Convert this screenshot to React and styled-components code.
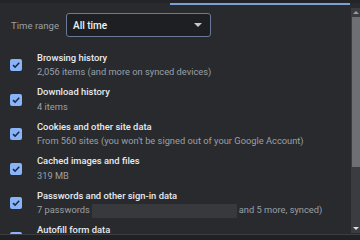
import React from 'react';
import styled, { createGlobalStyle } from 'styled-components';

const GlobalStyle = createGlobalStyle`
  html, body {
    margin: 0;
    padding: 0;
    background: #292a2d;
  }
  body {
    font-family: Roboto, "Liberation Sans", sans-serif;
  }
`;

const items = [
  { title: 'Browsing history', sub: '2,056 items (and more on synced devices)' },
  { title: 'Download history', sub: '4 items' },
  { title: 'Cookies and other site data', sub: "From 560 sites (you won't be signed out of your Google Account)" },
  { title: 'Cached images and files', sub: '319 MB' },
  { title: 'Passwords and other sign-in data', sub: '7 passwords', hidden: true, tail: 'and 5 more, synced)' },
  { title: 'Autofill form data', sub: '' },
];

function App() {
  return (
    <>
      <GlobalStyle />
      <Page>
        <TopStrip />
        <TabLine />
        <Middle>
          <Content>
            <TimeRow>
              <Label>Time range</Label>
              <Select>
                <span>All time</span>
                <Caret />
              </Select>
            </TimeRow>
            <List>
              {items.map((it) => (
                <Item key={it.title}>
                  <Check>
                    <svg width="12" height="12" viewBox="0 0 12 12">
                      <path d="M3 6.2 L5.1 8.2 L9.2 3.8" fill="none" stroke="#1d2a44" strokeWidth="1.6" />
                    </svg>
                  </Check>
                  <Text>
                    <Title>{it.title}</Title>
                    <Sub>
                      {it.sub}
                      {it.hidden && <Redacted />}
                      {it.tail}
                    </Sub>
                  </Text>
                </Item>
              ))}
            </List>
          </Content>
          <Scrollbar>
            <Arrow />
            <Thumb />
            <Arrow $down />
          </Scrollbar>
        </Middle>
        <Footer />
      </Page>
    </>
  );
}

const Page = styled.div`
  width: 360px;
  height: 240px;
  overflow: hidden;
  display: flex;
  flex-direction: column;
  background: #292a2d;
`;

const TopStrip = styled.div`
  height: 3px;
  background: #232427;
`;

const TabLine = styled.div`
  height: 2px;
  margin-left: 170px;
  width: 180px;
  background: #7d9fd6;
`;

const Middle = styled.div`
  flex: 1;
  display: flex;
  min-height: 0;
  overflow: hidden;
`;

const Content = styled.div`
  flex: 1;
  padding: 8px 0 0 10px;
`;

const TimeRow = styled.div`
  display: flex;
  align-items: center;
  height: 24px;
`;

const Label = styled.div`
  width: 55px;
  padding-left: 1px;
  font-size: 9.6px;
  color: #9aa0a6;
`;

const Select = styled.div`
  box-sizing: border-box;
  width: 145px;
  height: 24px;
  display: flex;
  align-items: center;
  justify-content: space-between;
  padding: 0 8px 0 6px;
  background: #1e1f22;
  border: 1px solid #6b7b97;
  border-radius: 3px;
  font-size: 10px;
  font-weight: 500;
  color: #f1f3f4;
`;

const Caret = styled.span`
  width: 0;
  height: 0;
  border-left: 4px solid transparent;
  border-right: 4px solid transparent;
  border-top: 4px solid #c4c7cc;
`;

const List = styled.div`
  margin-top: 11px;
  display: grid;
  grid-auto-rows: 34.5px;
`;

const Item = styled.div`
  display: flex;
  align-items: center;
`;

const Check = styled.div`
  width: 12px;
  height: 12px;
  border-radius: 2px;
  background: #8ab4f8;
  display: flex;
  flex-shrink: 0;
`;

const Text = styled.div`
  margin-left: 15px;
  display: flex;
  flex-direction: column;
`;

const Title = styled.div`
  font-size: 9.4px;
  line-height: 14.5px;
  font-weight: 500;
  color: #e8eaed;
  white-space: nowrap;
`;

const Sub = styled.div`
  font-size: 9.3px;
  line-height: 14.5px;
  color: #9aa0a6;
  white-space: nowrap;
  display: flex;
  align-items: center;
  min-height: 14.5px;
`;

const Redacted = styled.span`
  display: inline-block;
  width: 145px;
  height: 14px;
  margin: 0 2px;
  background: #38393d;
  border-radius: 1px;
  filter: blur(0.6px);
`;

const Scrollbar = styled.div`
  width: 9px;
  margin: 3px 0 1px 0;
  background: #3b3c3f;
  display: flex;
  flex-direction: column;
  align-items: center;
`;

const Arrow = styled.div`
  width: 0;
  height: 0;
  margin: ${(p) => (p.$down ? '0 0 3px' : '3px 0 0')};
  border-left: 3px solid transparent;
  border-right: 3px solid transparent;
  ${(p) => (p.$down ? 'border-top: 3px solid #e0e0e0;' : 'border-bottom: 3px solid #9a9a9a;')}
  order: ${(p) => (p.$down ? 3 : 0)};
`;

const Thumb = styled.div`
  width: 8px;
  height: 150px;
  margin-top: 3px;
  background: #6e6f72;
  order: 1;
  & + div {
    margin-top: auto;
  }
`;

const Footer = styled.div`
  height: 6px;
  flex-shrink: 0;
  border-top: 1px solid #3c3d40;
  background: #202124;
  box-sizing: border-box;
`;

export default App;
